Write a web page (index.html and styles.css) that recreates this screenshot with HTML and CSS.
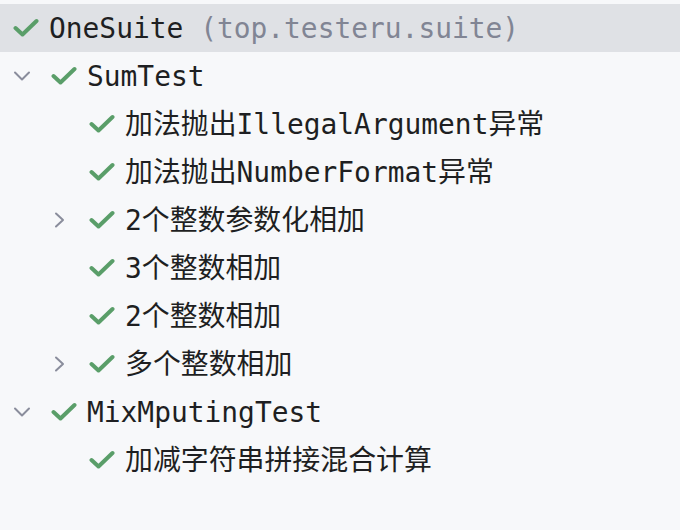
FILE: index.html
```html
<!DOCTYPE html>
<html>
<head>
<meta charset="utf-8">
<link rel="stylesheet" href="styles.css">
</head>
<body>
<div class="tree">
  <div class="row l0 selected">
    <svg class="check" viewBox="0 0 26 20"><polyline points="2.5,10 9.5,16.5 23.5,3"/></svg>
    <span class="label">OneSuite <span class="dim">(top.testeru.suite)</span></span>
  </div>
  <div class="row l1">
    <span class="slot"><svg class="chev-down" viewBox="0 0 18 10"><polyline points="2,1.5 9,8.5 16,1.5"/></svg></span>
    <svg class="check" viewBox="0 0 26 20"><polyline points="2.5,10 9.5,16.5 23.5,3"/></svg>
    <span class="label">SumTest</span>
  </div>
  <div class="row l2">
    <span class="slot"></span>
    <svg class="check" viewBox="0 0 26 20"><polyline points="2.5,10 9.5,16.5 23.5,3"/></svg>
    <span class="label">加法抛出IllegalArgument异常</span>
  </div>
  <div class="row l2">
    <span class="slot"></span>
    <svg class="check" viewBox="0 0 26 20"><polyline points="2.5,10 9.5,16.5 23.5,3"/></svg>
    <span class="label">加法抛出NumberFormat异常</span>
  </div>
  <div class="row l2">
    <span class="slot"><svg class="chev-right" viewBox="0 0 18 16"><polyline points="5,1.5 12,8 5,14.5"/></svg></span>
    <svg class="check" viewBox="0 0 26 20"><polyline points="2.5,10 9.5,16.5 23.5,3"/></svg>
    <span class="label">2个整数参数化相加</span>
  </div>
  <div class="row l2">
    <span class="slot"></span>
    <svg class="check" viewBox="0 0 26 20"><polyline points="2.5,10 9.5,16.5 23.5,3"/></svg>
    <span class="label">3个整数相加</span>
  </div>
  <div class="row l2">
    <span class="slot"></span>
    <svg class="check" viewBox="0 0 26 20"><polyline points="2.5,10 9.5,16.5 23.5,3"/></svg>
    <span class="label">2个整数相加</span>
  </div>
  <div class="row l2">
    <span class="slot"><svg class="chev-right" viewBox="0 0 18 16"><polyline points="5,1.5 12,8 5,14.5"/></svg></span>
    <svg class="check" viewBox="0 0 26 20"><polyline points="2.5,10 9.5,16.5 23.5,3"/></svg>
    <span class="label">多个整数相加</span>
  </div>
  <div class="row l1">
    <span class="slot"><svg class="chev-down" viewBox="0 0 18 10"><polyline points="2,1.5 9,8.5 16,1.5"/></svg></span>
    <svg class="check" viewBox="0 0 26 20"><polyline points="2.5,10 9.5,16.5 23.5,3"/></svg>
    <span class="label">MixMputingTest</span>
  </div>
  <div class="row l2">
    <span class="slot"></span>
    <svg class="check" viewBox="0 0 26 20"><polyline points="2.5,10 9.5,16.5 23.5,3"/></svg>
    <span class="label">加减字符串拼接混合计算</span>
  </div>
</div>
</body>
</html>
```

FILE: styles.css
```css
html, body {
  margin: 0;
  padding: 0;
  background: #f7f8fa;
  width: 680px;
  height: 530px;
  overflow: hidden;
}
.tree {
  padding-top: 4px;
  font-family: "DejaVu Sans Mono", "Noto Sans CJK SC", monospace;
  font-size: 27.9px;
  color: #1e1f22;
}
.row {
  display: flex;
  align-items: center;
  height: 48px;
  white-space: nowrap;
}
.row.selected {
  background: #dfe1e5;
}
.l0 { padding-left: 13px; }
.l1 { padding-left: 13px; }
.l2 { padding-left: 51px; }
.slot {
  width: 38px;
  flex: none;
  display: flex;
  align-items: center;
}
.check {
  width: 26px;
  height: 20px;
  flex: none;
  margin-right: 10px;
}
.check polyline {
  fill: none;
  stroke: #5a9e69;
  stroke-width: 4;
  stroke-linecap: round;
  stroke-linejoin: round;
}
.chev-down {
  width: 18px;
  height: 10px;
}
.chev-right {
  width: 18px;
  height: 16px;
}
.chev-down polyline, .chev-right polyline {
  fill: none;
  stroke: #8a8d9c;
  stroke-width: 2;
  stroke-linecap: round;
  stroke-linejoin: round;
}
.label {
  line-height: 46px;
  padding-top: 2px;
}
.dim {
  color: #818594;
}
```
